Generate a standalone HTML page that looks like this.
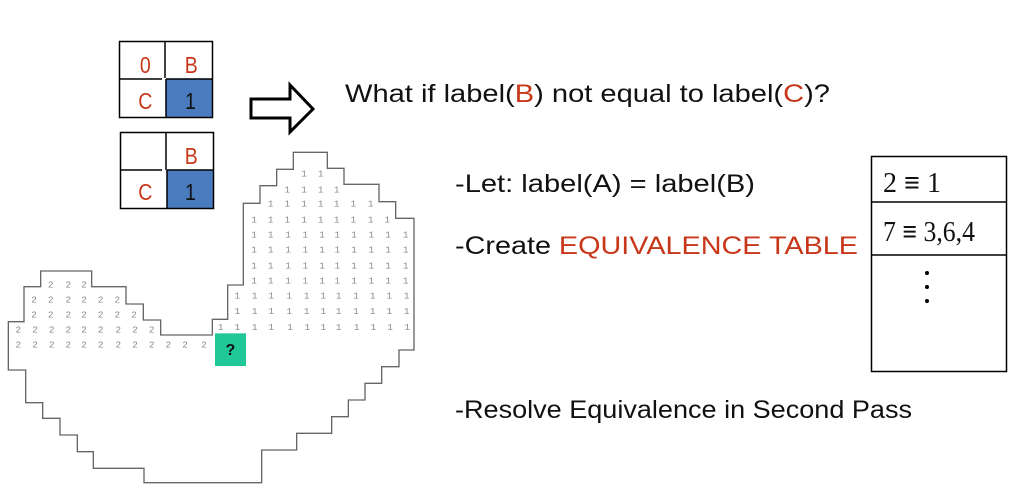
<!DOCTYPE html>
<html><head><meta charset="utf-8"><style>
html,body{margin:0;padding:0;background:#fff;width:1026px;height:493px;overflow:hidden}
svg{position:absolute;left:0;top:0}
.t{font-family:"Liberation Sans",sans-serif;font-size:25px;fill:#111}
.r{fill:#c8371a}
.c{font-family:"Liberation Sans",sans-serif;font-size:23px;fill:#c8371a;text-anchor:middle}
.s{font-family:"Liberation Serif",serif;font-size:28px;fill:#111}
</style></head><body>
<svg width="1026" height="493" viewBox="0 0 1026 493">
 <g stroke="#000" stroke-width="1.5" fill="none">
  <rect x="166" y="79" width="46" height="38" fill="#4a7bbf" stroke="none"/>
  <rect x="119.5" y="41.5" width="93" height="76"/>
  <line x1="119" y1="79" x2="162" y2="79"/><line x1="166" y1="79" x2="212" y2="79"/>
  <line x1="165" y1="41" x2="165" y2="78"/><line x1="166" y1="79" x2="166" y2="117"/>
  <rect x="167" y="170" width="46" height="38" fill="#4a7bbf" stroke="none"/>
  <rect x="120.5" y="132.5" width="93" height="76"/>
  <line x1="120" y1="170" x2="162" y2="170"/><line x1="167" y1="170" x2="213" y2="170"/>
  <line x1="166" y1="132" x2="166" y2="170"/><line x1="167" y1="170" x2="167" y2="208"/>
 </g>
 <g transform="scale(0.85,1)">
 <text class="c" x="171" y="73">0</text><text class="c" x="225" y="73">B</text>
 <text class="c" x="171" y="109">C</text><text class="c" x="224" y="109" style="fill:#111">1</text>
 <text class="c" x="225" y="164">B</text>
 <text class="c" x="171" y="200">C</text><text class="c" x="224" y="200" style="fill:#111">1</text>
 </g>
 <polygon points="251,99 290,99 290,85 313,109 290,132 290,118 251,118" fill="#fff" stroke="#000" stroke-width="3"/>
 <text class="t" x="345" y="102" textLength="485" lengthAdjust="spacingAndGlyphs">What if label(<tspan class="r">B</tspan>) not equal to label(<tspan class="r">C</tspan>)?</text>
 <text class="t" x="455" y="192" textLength="300" lengthAdjust="spacingAndGlyphs">-Let: label(A) = label(B)</text>
 <text class="t" x="455" y="254" textLength="403" lengthAdjust="spacingAndGlyphs">-Create <tspan class="r">EQUIVALENCE TABLE</tspan></text>
 <text class="t" x="455" y="418" textLength="457" lengthAdjust="spacingAndGlyphs">-Resolve Equivalence in Second Pass</text>
 <g stroke="#000" stroke-width="1.5" fill="none">
  <rect x="871.5" y="156.5" width="135" height="215"/>
  <line x1="871" y1="202" x2="1007" y2="202"/><line x1="871" y1="255" x2="1007" y2="255"/>
 </g>
 <text class="s" x="883" y="192">2 <tspan font-weight="bold">≡</tspan> 1</text>
 <text class="s" x="883" y="241" textLength="92" lengthAdjust="spacingAndGlyphs">7 <tspan font-weight="bold">≡</tspan> 3,6,4</text>
 <circle cx="927" cy="273" r="2"/><circle cx="927" cy="287" r="2"/><circle cx="927" cy="301" r="2"/>
</svg>
<svg width="440" height="350" viewBox="0 0 1320 1050" style="top:140px">
 <polygon fill="none" stroke="#666" stroke-width="4" points="25,690 25,545 72,545 72,440 122,440 122,393 275,393 275,440 378,440 378,492 430,492 430,540 482,540 482,585 637,585 637,538 683,538 683,435 730,435 730,190 780,190 780,137 830,137 830,88 880,88 880,37 982,37 982,85 1032,85 1032,133 1137,133 1137,185 1187,185 1187,235 1242,235 1242,630 1197,630 1197,680 1145,680 1145,730 1095,730 1095,780 1045,780 1045,830 995,830 995,880 890,880 890,930 785,930 785,1028 432,1028 432,985 280,985 280,935 232,935 232,885 180,885 180,835 128,835 128,788 77,788 77,690"/>
 <rect x="645" y="580" width="93" height="98" fill="#1fc896"/>
 <text x="691" y="645" font-family="Liberation Sans,sans-serif" font-size="48" font-weight="bold" text-anchor="middle" fill="#111">?</text>
 <g font-family="Liberation Mono,monospace" font-size="28" fill="#888" text-anchor="middle">
  <text y="442"><tspan x="152">2</tspan><tspan x="205">2</tspan><tspan x="252">2</tspan></text>
  <text y="488"><tspan x="102">2</tspan><tspan x="152">2</tspan><tspan x="205">2</tspan><tspan x="252">2</tspan><tspan x="302">2</tspan><tspan x="352">2</tspan></text>
  <text y="532"><tspan x="102">2</tspan><tspan x="152">2</tspan><tspan x="205">2</tspan><tspan x="252">2</tspan><tspan x="302">2</tspan><tspan x="352">2</tspan><tspan x="402">2</tspan></text>
  <text y="578"><tspan x="55">2</tspan><tspan x="105">2</tspan><tspan x="155">2</tspan><tspan x="205">2</tspan><tspan x="252">2</tspan><tspan x="302">2</tspan><tspan x="355">2</tspan><tspan x="405">2</tspan><tspan x="455">2</tspan></text>
  <text y="622"><tspan x="55">2</tspan><tspan x="105">2</tspan><tspan x="155">2</tspan><tspan x="205">2</tspan><tspan x="252">2</tspan><tspan x="302">2</tspan><tspan x="355">2</tspan><tspan x="405">2</tspan><tspan x="455">2</tspan><tspan x="505">2</tspan><tspan x="555">2</tspan><tspan x="612">2</tspan></text>
  <text y="110"><tspan x="912">1</tspan><tspan x="962">1</tspan></text>
  <text y="157"><tspan x="862">1</tspan><tspan x="912">1</tspan><tspan x="962">1</tspan><tspan x="1010">1</tspan></text>
  <text y="200"><tspan x="812">1</tspan><tspan x="862">1</tspan><tspan x="912">1</tspan><tspan x="962">1</tspan><tspan x="1010">1</tspan><tspan x="1060">1</tspan><tspan x="1112">1</tspan></text>
  <text y="248"><tspan x="762">1</tspan><tspan x="812">1</tspan><tspan x="862">1</tspan><tspan x="912">1</tspan><tspan x="962">1</tspan><tspan x="1010">1</tspan><tspan x="1060">1</tspan><tspan x="1112">1</tspan><tspan x="1162">1</tspan></text>
  <text y="292"><tspan x="762">1</tspan><tspan x="812">1</tspan><tspan x="864">1</tspan><tspan x="916">1</tspan><tspan x="966">1</tspan><tspan x="1012">1</tspan><tspan x="1062">1</tspan><tspan x="1114">1</tspan><tspan x="1164">1</tspan><tspan x="1217">1</tspan></text>
  <text y="338"><tspan x="762">1</tspan><tspan x="812">1</tspan><tspan x="864">1</tspan><tspan x="916">1</tspan><tspan x="966">1</tspan><tspan x="1012">1</tspan><tspan x="1062">1</tspan><tspan x="1114">1</tspan><tspan x="1164">1</tspan><tspan x="1217">1</tspan></text>
  <text y="385"><tspan x="762">1</tspan><tspan x="812">1</tspan><tspan x="864">1</tspan><tspan x="916">1</tspan><tspan x="966">1</tspan><tspan x="1012">1</tspan><tspan x="1062">1</tspan><tspan x="1114">1</tspan><tspan x="1164">1</tspan><tspan x="1217">1</tspan></text>
  <text y="430"><tspan x="762">1</tspan><tspan x="812">1</tspan><tspan x="864">1</tspan><tspan x="916">1</tspan><tspan x="966">1</tspan><tspan x="1012">1</tspan><tspan x="1062">1</tspan><tspan x="1114">1</tspan><tspan x="1164">1</tspan><tspan x="1217">1</tspan></text>
  <text y="475"><tspan x="712">1</tspan><tspan x="764">1</tspan><tspan x="814">1</tspan><tspan x="868">1</tspan><tspan x="920">1</tspan><tspan x="970">1</tspan><tspan x="1016">1</tspan><tspan x="1068">1</tspan><tspan x="1118">1</tspan><tspan x="1168">1</tspan><tspan x="1220">1</tspan></text>
  <text y="522"><tspan x="712">1</tspan><tspan x="764">1</tspan><tspan x="814">1</tspan><tspan x="868">1</tspan><tspan x="920">1</tspan><tspan x="970">1</tspan><tspan x="1016">1</tspan><tspan x="1068">1</tspan><tspan x="1118">1</tspan><tspan x="1168">1</tspan><tspan x="1220">1</tspan></text>
  <text y="570"><tspan x="662">1</tspan><tspan x="712">1</tspan><tspan x="764">1</tspan><tspan x="814">1</tspan><tspan x="870">1</tspan><tspan x="922">1</tspan><tspan x="970">1</tspan><tspan x="1016">1</tspan><tspan x="1070">1</tspan><tspan x="1120">1</tspan><tspan x="1170">1</tspan><tspan x="1222">1</tspan></text>
 </g>
</svg>
</body></html>
